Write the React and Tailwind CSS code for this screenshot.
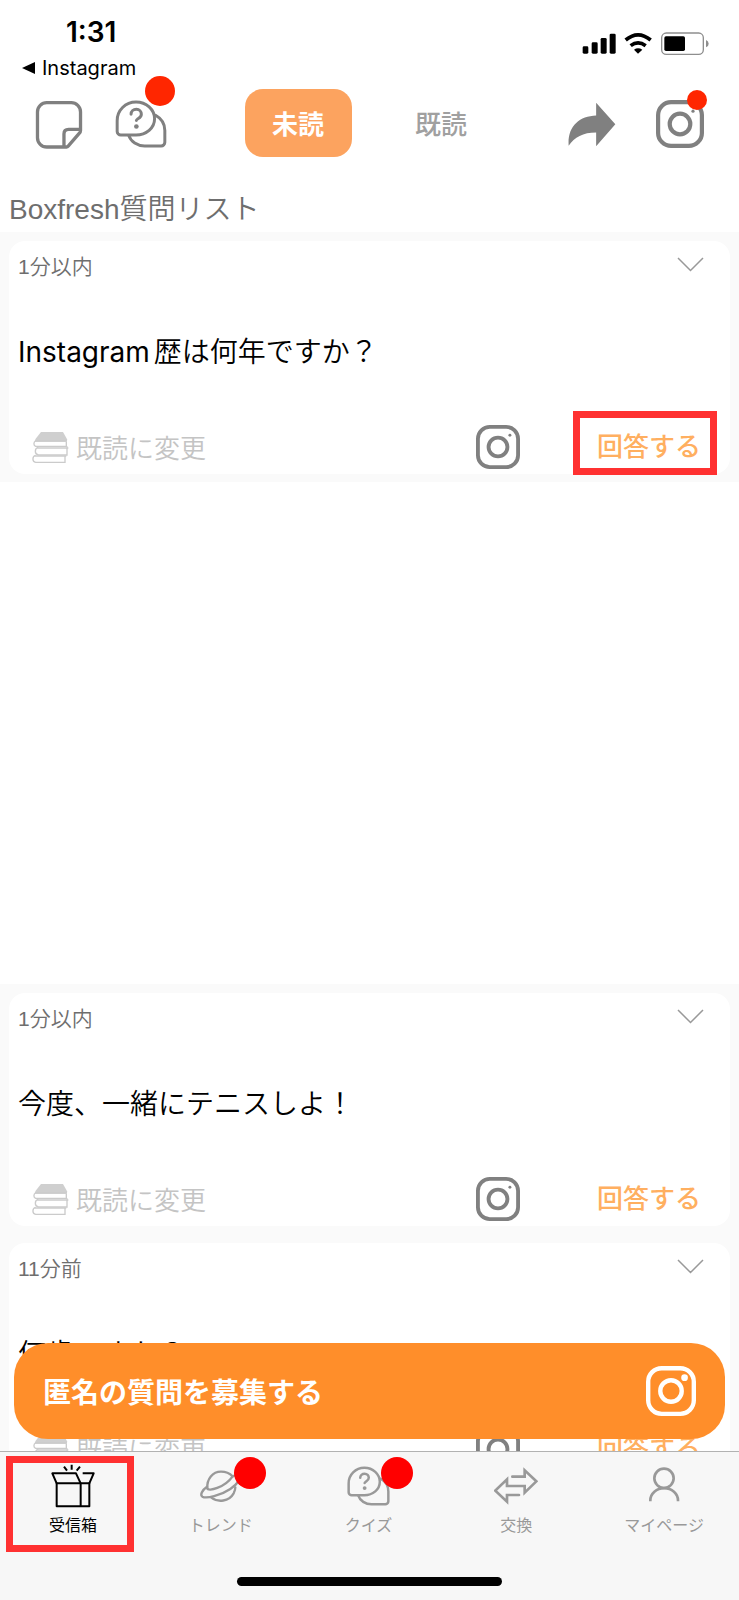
import React, { useState } from "react";

const InstagramIcon = ({ className, dot = 2 }) => (
  <svg viewBox="0 0 48 48" className={className} fill="none" stroke="currentColor" aria-hidden="true">
    <rect x="2.1" y="2.1" width="43.8" height="43.8" rx="13" strokeWidth="4.2" />
    <circle cx="24" cy="24" r="10.3" strokeWidth="4.2" />
    <circle cx="37" cy="11.2" r={dot} fill="currentColor" stroke="none" />
  </svg>
);

const NoteIcon = () => (
  <svg viewBox="105 298 144 148" className="w-12 h-[49px]" fill="none" stroke="currentColor" strokeWidth="10" strokeLinejoin="round" aria-hidden="true">
    <path d="M200 440H140a28 28 0 0 1-28-28V334a28 28 0 0 1 28-28h74a28 28 0 0 1 28 28v56q0 5-4 9l-32 37q-3 4-8 4Z" />
    <path d="M192 438V401q0-14 14-14H240" />
  </svg>
);

const QuestionIcon = ({ className }) => (
  <svg viewBox="345 297 156 145" className={className} fill="none" stroke="currentColor" strokeWidth="9" strokeLinecap="round" strokeLinejoin="round" aria-hidden="true">
    <path d="M362 403a11 11 0 0 1-11-11V360a57 56 0 0 1 57-57c31 0 56 23 56 51s-25 49-56 49z" />
    <path d="M386 404c6 19 26 32 48 32h50a11 11 0 0 0 11-11v-36c0-20-10-36-28-46" />
    <path d="M393 340c0-9 7-15 16-15s15 7 15 15c0 9-6 11-11 14-3 2-4 3-4 5" />
    <circle cx="409" cy="377" r="7" fill="currentColor" stroke="none" />
  </svg>
);

const ShareIcon = () => (
  <svg viewBox="595 299 145 135" className="w-12 h-[45px]" fill="currentColor" aria-hidden="true">
    <path d="M597 431C593 372 628 341 680 339V301L738 366 680 432V391C640 391 615 405 597 431Z" />
  </svg>
);

const StatusIcons = () => (
  <svg viewBox="637 97 381 69" className="w-[127px] h-[23px]" aria-hidden="true">
    <rect x="639" y="140" width="17" height="22" rx="4" />
    <rect x="666" y="128" width="18" height="34" rx="4" />
    <rect x="693" y="115" width="18" height="47" rx="4" />
    <rect x="720" y="102" width="18" height="60" rx="4" />
    <path d="M768 121Q805 90 843 121M783 138Q805 121 828 138" fill="none" stroke="#000" strokeWidth="11" />
    <path d="M805 162 793 150Q805 142 818 150Z" />
    <rect x="876" y="100" width="125" height="64" rx="14" fill="none" stroke="#8e8e8e" strokeWidth="4" />
    <rect x="884" y="110" width="62" height="44" rx="5" />
    <path d="M1009 121q8 3 8 11t-8 11z" fill="#8e8e8e" />
  </svg>
);

const BooksIcon = () => (
  <svg viewBox="97 603 111 96" className="w-[37px] h-8" fill="none" stroke="#cbcbcb" strokeWidth="4" aria-hidden="true">
    <path d="M124 606H190L203 629 200 635H104L108 626Z" fill="#cfcfcf" stroke="none" />
    <path d="M202 633H108c-7 3-7 13 0 16H200" />
    <path d="M200 635v13M199 649c3 0 4 2 4 4" />
    <path d="M116 652c-12 3-12 20 0 23H204M110 654H206M202 655v19" />
    <path d="M108 676c-11 3-11 19 0 21H198M104 678H200M196 679v17" />
  </svg>
);

const BoxIcon = () => (
  <svg viewBox="154 102 132 132" className="size-11" fill="none" stroke="currentColor" strokeWidth="6" strokeLinejoin="round" aria-hidden="true">
    <path d="M171 160H269V229H171ZM243 160V229" />
    <path d="M171 160 158 130H229L243 160M249 130H282L269 160" />
    <path d="M216 104V119M193 110 202 122M241 110 231 122" />
  </svg>
);

const PlanetIcon = () => (
  <svg viewBox="596 101 132 132" className="size-11" fill="none" stroke="currentColor" strokeWidth="7" strokeLinecap="round" strokeLinejoin="round" aria-hidden="true">
    <path d="M621 174C619 146 637 124 662 124c14 0 26 5 35 14" />
    <path d="M620 169C604 180 599 194 606 199 618 206 660 196 690 176 712 161 723 144 717 137 714 133 704 134 697 138" />
    <path d="M621 174c2 11 52-2 76-36" />
    <path d="M633 202c20 15 53 12 67-13 3-6 5-12 5-18" />
  </svg>
);

const ExchangeIcon = () => (
  <svg viewBox="375 101 132 132" className="size-11" fill="none" stroke="currentColor" strokeWidth="8" strokeLinecap="round" aria-hidden="true">
    <path d="M430 139H467V120L502 153 467 187V167H414V147L379 181 414 214V194H450" />
  </svg>
);

const PersonIcon = () => (
  <svg viewBox="818 101 132 132" className="size-11" fill="none" stroke="currentColor" strokeWidth="8" aria-hidden="true">
    <circle cx="884" cy="144" r="29" />
    <path d="M843 213v-3a41 36 0 0 1 83 0v3" />
  </svg>
);

const tabs = [
  { label: "受信箱", icon: <BoxIcon />, marked: true },
  { label: "トレンド", icon: <PlanetIcon />, badge: true },
  { label: "クイズ", icon: <QuestionIcon className="w-[43px] h-10" />, badge: true },
  { label: "交換", icon: <ExchangeIcon /> },
  { label: "マイページ", icon: <PersonIcon /> },
];

const QuestionCard = ({ time, marked, children }) => (
  <article className="bg-[#fafafa] px-[9px] pt-[9px] pb-2">
    <div className="bg-white rounded-2xl px-[9px] pt-3 pb-[3px]">
      <div className="flex items-start justify-between pr-[17px] text-[#6e6e6e]">
        <time className="text-[21px] leading-7 font-[350] font-['Liberation_Sans','Noto_Sans_CJK_JP',sans-serif]">{time}</time>
        <button aria-label="開く" className="pt-1">
          <svg viewBox="0 0 27 15" className="w-[27px] h-[15px]" fill="none" stroke="#999" strokeWidth="1.5" aria-hidden="true">
            <path d="M1 1 13.5 13.5 26 1" />
          </svg>
        </button>
      </div>
      <p className="my-[50px] text-[28px] leading-[42px] font-[350] text-black font-['Inter','Noto_Sans_CJK_JP',sans-serif]">
        {children}
      </p>
      <div className="flex items-center h-12 pl-[14px] pr-5">
        <button className="flex items-center gap-[7px] text-[26px] leading-9 font-[350] text-[#c4c4c4]">
          <BooksIcon />
          既読に変更
        </button>
        <button aria-label="Instagramでシェア" className="ml-auto text-[#808080]">
          <InstagramIcon className="size-11" dot={1.6} />
        </button>
        <button className="relative self-start h-11 ml-[77px] text-[26px] leading-9 font-medium text-[#ffaf60]">
          回答する
          {marked && <span className="absolute -top-3 -bottom-2 -left-6 -right-4 border-[7px] border-[#ff3131]" />}
        </button>
      </div>
    </div>
  </article>
);

const App = () => {
  const [filter, setFilter] = useState("unread");
  const [current, setCurrent] = useState("受信箱");

  return (
    <div className="h-screen flex flex-col overflow-hidden bg-white font-['Noto_Sans_CJK_JP',sans-serif]">
      <header>
        <div className="flex justify-between h-20 pr-[30px] font-['Inter',sans-serif] text-black">
          <div className="pt-[14px] pl-[22px]">
            <p className="pl-[44px] text-[28px] leading-9 font-semibold">1:31</p>
            <a href="#instagram" className="flex items-center gap-[7px] text-xl leading-9">
              <svg viewBox="0 0 13 12" className="w-[13px] h-3" aria-hidden="true">
                <path d="M0 6 13 0V12Z" />
              </svg>
              Instagram
            </a>
          </div>
          <div className="pt-8">
            <StatusIcons />
          </div>
        </div>

        <div className="grid grid-cols-[1fr_auto_1fr] items-center h-[88px] text-[#808080]">
          <div className="flex items-center gap-8 pl-[35px]">
            <button aria-label="ノート">
              <NoteIcon />
            </button>
            <button aria-label="質問" className="relative">
              <QuestionIcon className="w-[52px] h-12" />
              <span className="absolute -top-6 -right-2 size-[30px] rounded-full bg-[#ff2600]" />
            </button>
          </div>
          <div className="flex gap-9 pb-[2px] text-[26px] leading-9">
            <button
              onClick={() => setFilter("unread")}
              className={`w-[107px] h-[68px] rounded-[18px] ${filter === "unread" ? "bg-[#fca35f] text-white font-bold" : "text-[#a0a0a0] font-medium"}`}
            >
              未読
            </button>
            <button
              onClick={() => setFilter("read")}
              className={`w-[107px] h-[68px] rounded-[18px] ${filter === "read" ? "bg-[#fca35f] text-white font-bold" : "text-[#a0a0a0] font-medium"}`}
            >
              既読
            </button>
          </div>
          <div className="flex items-center justify-end gap-10 pr-[35px]">
            <button aria-label="シェア">
              <ShareIcon />
            </button>
            <button aria-label="Instagram" className="relative">
              <InstagramIcon className="size-12" dot={1.6} />
              <span className="absolute -top-[10px] -right-[3px] size-5 rounded-full bg-[#ff2600]" />
            </button>
          </div>
        </div>

        <h1 className="h-16 pt-6 pl-[9px] text-[28px] leading-9 font-[350] text-[#6e6e6e] font-['Liberation_Sans','Noto_Sans_CJK_JP',sans-serif]">
          Boxfresh質問リスト
        </h1>
      </header>

      <main className="relative flex-1 min-h-0 overflow-hidden">
        <QuestionCard time="1分以内" marked>
          <span className="mr-1 font-normal">Instagram</span>歴は何年ですか？
        </QuestionCard>
        <div className="h-[502px]" />
        <QuestionCard time="1分以内">今度、一緒にテニスしよ！</QuestionCard>
        <QuestionCard time="11分前">何歳ですか？</QuestionCard>

        <button className="absolute inset-x-[14px] bottom-3 h-24 flex items-center justify-between rounded-[34px] bg-[#ff8e2a] px-[29px] text-[28px] font-bold text-white">
          匿名の質問を募集する
          <InstagramIcon className="size-[50px]" dot={3.2} />
        </button>
      </main>

      <nav className="border-t border-[#b2b2b2] bg-[#f7f7f7] pb-[14px]">
        <ul className="grid grid-cols-5 pt-3">
          {tabs.map((tab) => (
            <li key={tab.label} className="relative">
              <button
                onClick={() => setCurrent(tab.label)}
                className={`w-full pr-[2px] flex flex-col items-center gap-1 text-base leading-6 ${current === tab.label ? "text-black" : "text-[#999]"}`}
              >
                <span className="flex items-center justify-center h-11">{tab.icon}</span>
                {tab.label}
              </button>
              {tab.badge && <span className="absolute -top-[7px] left-1/2 ml-3 size-8 rounded-full bg-[#ff0000]" />}
              {tab.marked && (
                <span className="absolute -top-2 -bottom-4 left-[6px] right-[14px] border-[7px] border-[#ff3131] pointer-events-none" />
              )}
            </li>
          ))}
        </ul>
        <div className="mx-auto mt-[41px] w-[265px] h-[9px] rounded-full bg-black" />
      </nav>
    </div>
  );
};

export default App;
